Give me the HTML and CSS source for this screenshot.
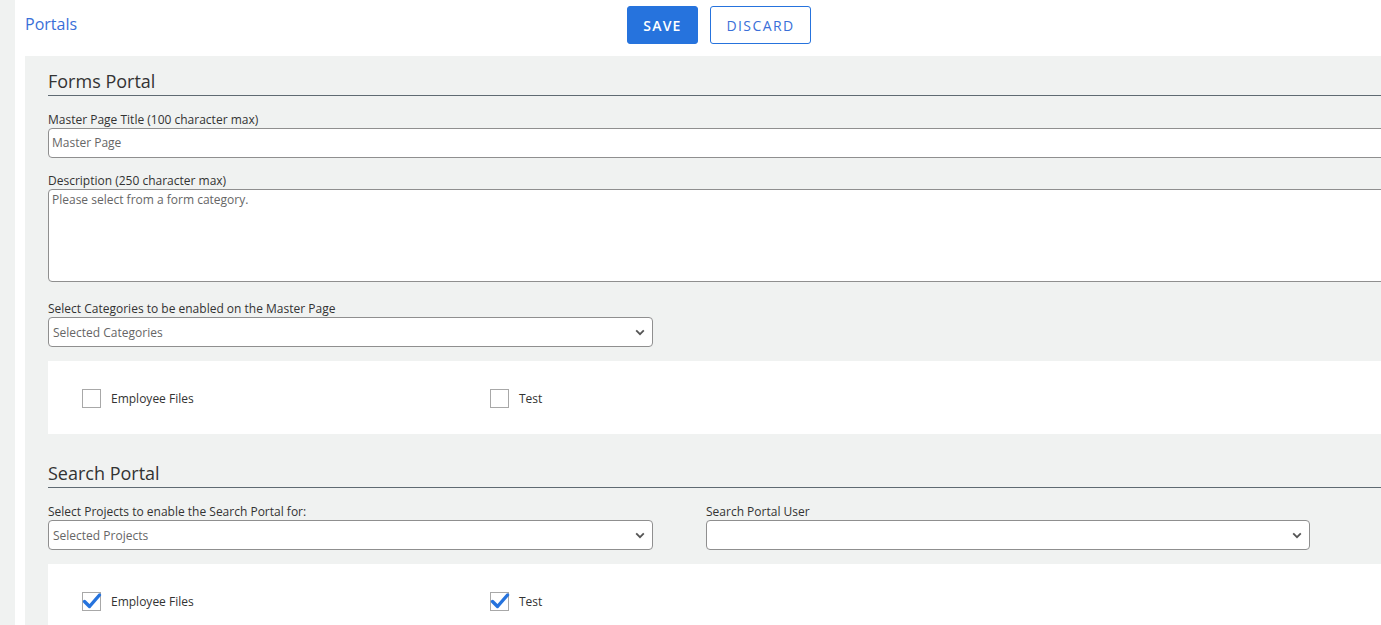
FILE: index.html
```html
<!DOCTYPE html>
<html>
<head>
<meta charset="utf-8">
<link rel="stylesheet" href="styles.css">
</head>
<body>
<div class="app">
  <aside class="sidebar"></aside>
  <main class="main">
    <header class="topbar">
      <a class="page-title">Portals</a>
      <div class="actions">
        <button class="btn btn-primary">SAVE</button>
        <button class="btn btn-outline">DISCARD</button>
      </div>
    </header>
    <section class="panel">
      <div class="panel-inner">
        <h2 class="section-title">Forms Portal</h2>
        <div class="field field-first">
          <label class="field-label">Master Page Title (100 character max)</label>
          <div class="input">Master Page</div>
        </div>
        <div class="field">
          <label class="field-label">Description (250 character max)</label>
          <div class="textarea">Please select from a form category.</div>
        </div>
        <div class="field field-select">
          <label class="field-label">Select Categories to be enabled on the Master Page</label>
          <div class="select select-w1">
            <span>Selected Categories</span>
            <svg class="chev" width="10" height="7" viewBox="0 0 10 7"><path d="M1.2 1.4 L5 5.2 L8.8 1.4" fill="none" stroke="#555" stroke-width="1.8"/></svg>
          </div>
        </div>
        <div class="check-box-area">
          <label class="check"><span class="box"></span><span>Employee Files</span></label>
          <label class="check"><span class="box"></span><span>Test</span></label>
        </div>

        <h2 class="section-title section-second">Search Portal</h2>
        <div class="select-row">
          <div class="field field-first">
            <label class="field-label">Select Projects to enable the Search Portal for:</label>
            <div class="select select-w1">
              <span>Selected Projects</span>
              <svg class="chev" width="10" height="7" viewBox="0 0 10 7"><path d="M1.2 1.4 L5 5.2 L8.8 1.4" fill="none" stroke="#555" stroke-width="1.8"/></svg>
            </div>
          </div>
          <div class="field field-first">
            <label class="field-label">Search Portal User</label>
            <div class="select select-w2">
              <span></span>
              <svg class="chev" width="10" height="7" viewBox="0 0 10 7"><path d="M1.2 1.4 L5 5.2 L8.8 1.4" fill="none" stroke="#555" stroke-width="1.8"/></svg>
            </div>
          </div>
        </div>
        <div class="check-box-area check-box-area-2">
          <label class="check"><span class="box checked"><svg class="tick" width="20" height="18" viewBox="0 0 20 18"><path d="M2.5 9.5 L7.5 14.5 L17.5 3" fill="none" stroke="#2673dd" stroke-width="3.4" stroke-linecap="round" stroke-linejoin="round"/></svg></span><span>Employee Files</span></label>
          <label class="check"><span class="box checked"><svg class="tick" width="20" height="18" viewBox="0 0 20 18"><path d="M2.5 9.5 L7.5 14.5 L17.5 3" fill="none" stroke="#2673dd" stroke-width="3.4" stroke-linecap="round" stroke-linejoin="round"/></svg></span><span>Test</span></label>
        </div>
      </div>
    </section>
  </main>
</div>
</body>
</html>
```

FILE: styles.css
```css
html, body {
  margin: 0;
  padding: 0;
  background: #ffffff;
  overflow: hidden;
  height: 625px;
}
body {
  font-family: "Open Sans", "Noto Sans", sans-serif;
  color: #333;
}
.app {
  display: flex;
  height: 625px;
  overflow: hidden;
}
.sidebar {
  width: 15px;
  flex: 0 0 15px;
  background: #f0f2f1;
}
.main {
  flex: 1;
  padding-left: 10px;
  min-width: 0;
  overflow: hidden;
}
.topbar {
  height: 56px;
  display: grid;
  grid-template-columns: 602px auto;
  align-items: start;
}
.page-title {
  color: #3a6fd8;
  font-size: 16px;
  line-height: 22px;
  margin-top: 13px;
  text-decoration: none;
}
.actions {
  display: flex;
  gap: 12px;
  padding-top: 6px;
}
.btn {
  height: 38px;
  border-radius: 3px;
  font-family: "Open Sans", sans-serif;
  font-size: 14px;
  letter-spacing: 1.2px;
  cursor: pointer;
  padding: 0;
}
.btn-primary {
  width: 71px;
  background: #2673dd;
  color: #fff;
  border: 1px solid #2673dd;
  font-weight: 600;
}
.btn-outline {
  width: 101px;
  background: #fff;
  color: #3a6fd8;
  border: 1px solid #2673dd;
  font-weight: 400;
  letter-spacing: 1.4px;
}
.panel {
  background: #f0f2f1;
  padding: 12px 0 0 23px;
  height: 569px;
  box-sizing: border-box;
}
.panel-inner {
  width: 1400px;
}
.section-title {
  margin: 0;
  font-size: 18px;
  font-weight: 400;
  line-height: 25px;
  padding-top: 1px;
  padding-bottom: 1px;
  color: #333;
  border-bottom: 1px solid #5f6a72;
}
.section-second {
  margin-top: 26px;
}
.field {
  margin-top: 15px;
}
.field-first {
  margin-top: 16px;
}
.field-select {
  margin-top: 19px;
}
.field-label {
  display: block;
  font-size: 12px;
  line-height: 16px;
  margin-bottom: 0;
  color: #333;
}
.input, .textarea, .select {
  box-sizing: border-box;
  background: #fff;
  border: 1px solid #8f8f8f;
  border-radius: 4px;
  font-size: 12px;
  color: #666;
  padding-left: 3px;
}
.input {
  height: 30px;
  line-height: 27px;
}
.textarea {
  height: 93px;
  line-height: 16px;
  padding-top: 2px;
}
.select {
  height: 30px;
  display: flex;
  align-items: center;
  justify-content: space-between;
  padding: 0 7px 0 4px;
}
.select-w1 { width: 605px; }
.select-w2 { width: 604px; }
.chev { flex: 0 0 auto; margin-top: 1px; }
.select-row {
  display: grid;
  grid-template-columns: 605px 604px;
  column-gap: 53px;
}
.check-box-area {
  margin-top: 14px;
  background: #fff;
  height: 73px;
  display: grid;
  grid-template-columns: 408px 408px;
  align-items: center;
  padding-left: 34px;
  padding-top: 1px;
  box-sizing: border-box;
}
.check-box-area-2 {
  margin-top: 14px;
}
.check {
  display: flex;
  align-items: center;
  gap: 10px;
  font-size: 12px;
  color: #333;
}
.box {
  position: relative;
  box-sizing: border-box;
  width: 19px;
  height: 19px;
  border: 1px solid #a8a8a8;
  background: #fff;
}
.tick {
  position: absolute;
  left: -1px;
  top: -1px;
}
```
